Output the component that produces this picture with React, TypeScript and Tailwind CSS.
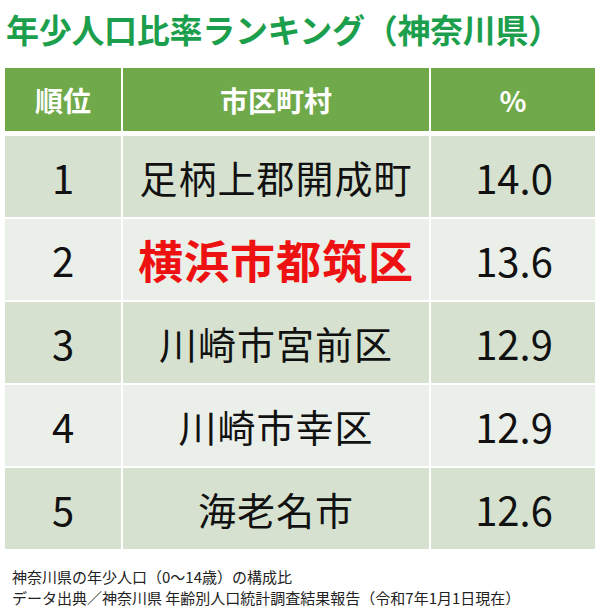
const rows = [
  { rank: 1, name: '足柄上郡開成町', pct: '14.0' },
  { rank: 2, name: '横浜市都筑区', pct: '13.6', highlight: true },
  { rank: 3, name: '川崎市宮前区', pct: '12.9' },
  { rank: 4, name: '川崎市幸区', pct: '12.9' },
  { rank: 5, name: '海老名市', pct: '12.6' },
];

const font = { fontFamily: '"Noto Sans CJK JP", "Noto Sans", sans-serif' };

export default function App() {
  return (
    <div className="w-[600px] h-[613px] bg-white overflow-hidden" style={font}>
      <h1 className="pl-[6px] pt-[7px] h-[68px] text-[33px] leading-[44px] font-bold text-[#1c9f4d] tracking-[-0.3px]">
        年少人口比率ランキング（神奈川県）
      </h1>

      <div className="mx-[5px] w-[590px]">
        <div className="grid grid-cols-[116px_306px_164px] gap-[2px] h-[63px] text-white text-[28px] font-bold">
          <div className="bg-[#70a94a] flex items-center justify-center">順位</div>
          <div className="bg-[#70a94a] flex items-center justify-center">市区町村</div>
          <div className="bg-[#70a94a] flex items-center justify-center">%</div>
        </div>

        <div className="mt-[5px] flex flex-col gap-[2px]">
          {rows.map((r) => {
            const bg = r.rank % 2 === 1 ? 'bg-[#d6e2cf]' : 'bg-[#ebefe9]';
            return (
              <div
                key={r.rank}
                className="grid grid-cols-[116px_306px_164px] gap-[2px] h-[81px] text-[#111]"
              >
                <div className={`${bg} flex items-center justify-center text-[40px]`}>
                  {r.rank}
                </div>
                <div className={`${bg} flex items-center justify-center`}>
                  {r.highlight ? (
                    <span className="text-[#ee1111] text-[45px] font-bold tracking-[1px]">
                      {r.name}
                    </span>
                  ) : (
                    <span className="text-[38px] tracking-[1px]">{r.name}</span>
                  )}
                </div>
                <div className={`${bg} flex items-center justify-center text-[40px] pl-[2px]`}>
                  {r.pct}
                </div>
              </div>
            );
          })}
        </div>
      </div>

      <div className="mt-[17px] pl-[12px] text-[15px] leading-[21px] text-[#222]">
        <p>神奈川県の年少人口（0～14歳）の構成比</p>
        <p>データ出典／神奈川県 年齢別人口統計調査結果報告（令和7年1月1日現在）</p>
      </div>
    </div>
  );
}
